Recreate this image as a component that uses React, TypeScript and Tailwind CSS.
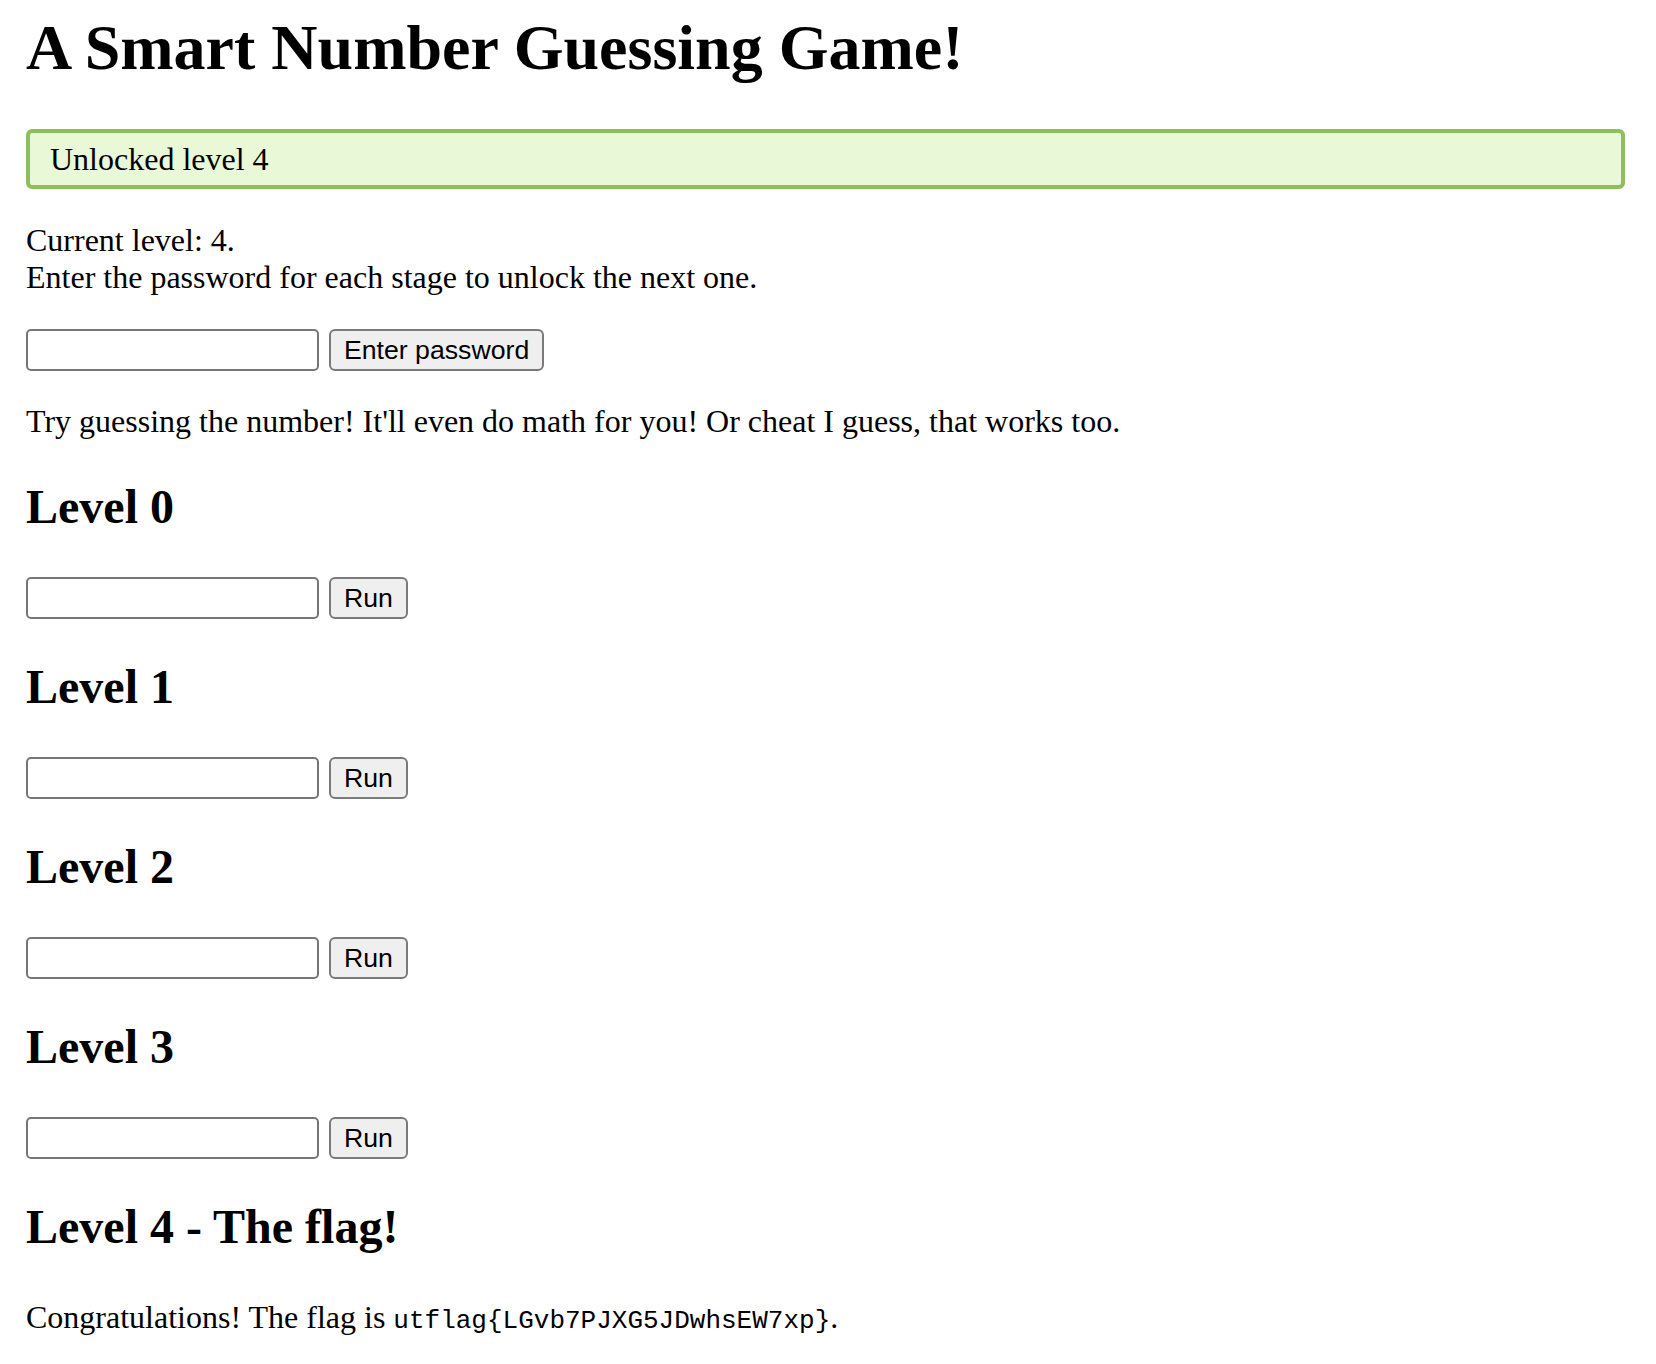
const levels = ["Level 0", "Level 1", "Level 2", "Level 3"];

function GuessRow({ label }: { label: string }) {
  return (
    <form
      className="mt-[43px] flex h-[42px] items-center gap-[10px]"
      onSubmit={(e) => e.preventDefault()}
    >
      <input
        type="text"
        className="h-[42px] w-[293px] rounded-[5px] border-2 border-[#767676] bg-white px-[4px] font-['Liberation_Sans',Arial,sans-serif] text-[26px] outline-none"
      />
      <button
        type="submit"
        className="flex h-[42px] items-center justify-center rounded-[6px] border-2 border-[#7a7a7a] bg-[#efefef] px-[13px] font-['Liberation_Sans',Arial,sans-serif] text-[26.67px] leading-none text-black"
      >
        {label}
      </button>
    </form>
  );
}

export default function App() {
  return (
    <div className="min-h-[1364px] bg-white pt-[11px] pl-[26px] pr-[31px] font-['Liberation_Serif','Times_New_Roman',serif] text-black">
      <h1 className="text-[64px] font-bold leading-[74px]">A Smart Number Guessing Game!</h1>

      {/* Status banner */}
      <div className="mt-[44px] rounded-[6px] border-4 border-[#8dc05b] bg-[#e9f8d6] py-[8px] pl-[20px] text-[32px] leading-[36px]">
        Unlocked level 4
      </div>

      <p className="mt-[32.5px] text-[32px] leading-[37px]">
        Current level: 4.
        <br />
        Enter the password for each stage to unlock the next one.
      </p>

      <div className="-mt-[9.5px]">
        <GuessRow label="Enter password" />
      </div>

      <p className="mt-[32px] text-[32px] leading-[36px]">
        Try guessing the number! It'll even do math for you! Or cheat I guess, that works too.
      </p>

      {levels.map((lvl) => (
        <section key={lvl}>
          <h2 className="mt-[40px] text-[48px] font-bold leading-[55px]">{lvl}</h2>
          <GuessRow label="Run" />
        </section>
      ))}

      <h2 className="mt-[40px] text-[48px] font-bold leading-[55px]">Level 4 - The flag!</h2>
      <p className="mt-[45px] text-[32px] leading-[36px]">
        Congratulations! The flag is{" "}
        <code className="font-['Liberation_Mono','Courier_New',monospace] text-[26px]">
          utflag{"{"}LGvb7PJXG5JDwhsEW7xp{"}"}
        </code>
        .
      </p>
    </div>
  );
}
